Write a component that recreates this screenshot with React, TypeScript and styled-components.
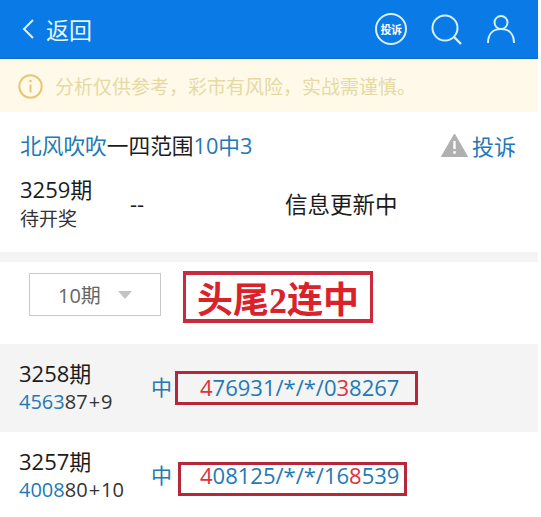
import React from "react";
import styled, { createGlobalStyle } from "styled-components";

const GlobalStyle = createGlobalStyle`
  html, body {
    margin: 0;
    padding: 0;
    background: #fff;
  }
  * {
    box-sizing: border-box;
  }
`;

const BlueText = "#2279b5";
const DarkText = "#1c1c1c";
const Mark = "#d8343a";

const Page = styled.div`
  width: 538px;
  height: 517px;
  overflow: hidden;
  font-family: "Open Sans", "Noto Sans CJK SC", sans-serif;
  color: ${DarkText};
`;

const Header = styled.header`
  height: 59px;
  background: #0a7ae6;
  display: flex;
  align-items: center;
  padding: 0 22px;
  color: #fff;
  border-bottom: 1px solid #0a6bc4;
`;

const BackLabel = styled.span`
  font-size: 23px;
  margin-left: 12px;
  color: #e8f6ff;
`;

const HeaderIcons = styled.div`
  margin-left: auto;
  display: flex;
  align-items: center;
  gap: 24px;
`;

const ReportBadge = styled.div`
  width: 32px;
  height: 32px;
  border-radius: 50%;
  border: 2px solid #d5f0ff;
  display: flex;
  align-items: center;
  justify-content: center;
  font-size: 11px;
  font-weight: 700;
  white-space: nowrap;
  letter-spacing: -0.5px;
`;

const Notice = styled.div`
  height: 52px;
  margin-top: 1px;
  background: #fff9ea;
  display: flex;
  align-items: center;
  gap: 12px;
  padding-left: 18px;
  font-size: 19px;
  color: #e6d9a2;
`;

const Title = styled.div`
  height: 65px;
  padding: 0 22px 0 20px;
  display: flex;
  align-items: center;
  font-size: 21.7px;
`;

const Blue = styled.span`
  color: ${BlueText};
`;

const Red = styled.span`
  color: ${Mark};
`;

const ReportLink = styled.span`
  margin-left: auto;
  display: flex;
  align-items: center;
  gap: 4px;
  font-size: 22px;
  color: ${BlueText};
`;

const Current = styled.div`
  height: 75px;
  padding: 0 0 0 20px;
  display: flex;
  align-items: flex-start;
`;

const CurrentPeriod = styled.div`
  width: 110px;
  margin-top: -2px;
`;

const PeriodName = styled.div`
  font-size: 22px;
  line-height: 28px;
`;

const Pending = styled.div`
  margin-top: 3px;
  font-size: 19px;
  line-height: 26px;
  color: #333;
`;

const Dashes = styled.div`
  width: 155px;
  font-size: 22px;
  line-height: 28px;
  padding-top: 12px;
`;

const Updating = styled.div`
  font-size: 22.5px;
  line-height: 28px;
  padding-top: 14px;
`;

const Band = styled.div`
  height: 10px;
  background: #f3f4f3;
`;

const FilterRow = styled.div`
  height: 82px;
  padding: 9px 0 0 29px;
  display: flex;
  align-items: flex-start;
  gap: 22px;
`;

const Select = styled.div`
  width: 132px;
  height: 43px;
  margin-top: 2px;
  border: 1px solid #c9c9c9;
  display: flex;
  align-items: center;
  padding-left: 28px;
  font-size: 20px;
  color: #666;
  gap: 17px;
`;

const Caret = styled.i`
  width: 0;
  height: 0;
  border-left: 7px solid transparent;
  border-right: 7px solid transparent;
  border-top: 8px solid #c4c4c4;
`;

const Stamp = styled.div`
  width: 190px;
  height: 52px;
  border: 3px solid #c92a3e;
  border-width: 4px 3px;
  display: flex;
  align-items: center;
  justify-content: center;
  font-family: "Liberation Serif", "Noto Sans CJK SC", serif;
  font-weight: 700;
  font-size: 36px;
  color: #d9222a;
  white-space: nowrap;
`;

const Row = styled.div<{ $shaded?: boolean }>`
  position: relative;
  height: ${({ $shaded }) => ($shaded ? "88px" : "85px")};
  background: ${({ $shaded }) => ($shaded ? "#f4f4f4" : "#fff")};
  padding: 15px 0 0 19px;
  display: flex;
  align-items: flex-start;
`;

const RowPeriod = styled.div`
  width: 132px;
`;

const Draw = styled.div`
  margin-top: 1px;
  font-size: 20px;
  line-height: 27px;
  color: #333;
`;

const Plus = styled.span`
  margin: 0 1px;
`;

const Hit = styled.div`
  width: 49px;
  font-size: 21px;
  line-height: 28px;
  padding-top: 14px;
  color: ${BlueText};
`;

const Numbers = styled.div`
  font-size: 22px;
  line-height: 28px;
  padding-top: 14px;
  color: ${BlueText};
  white-space: nowrap;
`;

const HighlightBox = styled.div<{ $left: number; $top: number; $width: number }>`
  position: absolute;
  left: ${({ $left }) => $left}px;
  top: ${({ $top }) => $top}px;
  width: ${({ $width }) => $width}px;
  height: 34px;
  border: 3px solid #b5283a;
`;

const IconSvg = styled.svg`
  display: block;
  flex: none;
`;

const Chevron = () => (
  <IconSvg width="12" height="20" viewBox="0 0 12 20" fill="none">
    <path d="M11 1 2 10l9 9" stroke="#d9f2ff" strokeWidth="2" />
  </IconSvg>
);

const SearchIcon = () => (
  <IconSvg width="31" height="31" viewBox="0 0 31 31" fill="none">
    <circle cx="14" cy="14" r="12.5" stroke="#d5f0ff" strokeWidth="2" />
    <path d="m23 23 7 7" stroke="#d5f0ff" strokeWidth="2.4" />
  </IconSvg>
);

const UserIcon = () => (
  <IconSvg width="30" height="30" viewBox="0 0 30 30" fill="none">
    <circle cx="15" cy="8.5" r="6.5" stroke="#d5f0ff" strokeWidth="2" />
    <path d="M2 29c0-9 5-14 13-14s13 5 13 14" stroke="#d5f0ff" strokeWidth="2" />
  </IconSvg>
);

const InfoIcon = () => (
  <IconSvg width="25" height="25" viewBox="0 0 25 25" fill="none">
    <circle cx="12.5" cy="12.5" r="11.2" stroke="#e5c872" strokeWidth="2" />
    <path d="M12.5 10.5v8" stroke="#e5c872" strokeWidth="2" />
    <circle cx="12.5" cy="7" r="1.3" fill="#e5c872" />
  </IconSvg>
);

const WarnIcon = () => (
  <IconSvg width="27" height="24" viewBox="0 0 27 24">
    <path d="M13.5 1 26.5 23.5H.5z" fill="#b0b0b0" stroke="#b0b0b0" strokeLinejoin="round" />
    <path d="M13.5 8v8" stroke="#fff" strokeWidth="2.4" />
    <circle cx="13.5" cy="19.5" r="1.4" fill="#fff" />
  </IconSvg>
);

const App: React.FC = () => (
  <Page>
    <GlobalStyle />
    <Header>
      <Chevron />
      <BackLabel>返回</BackLabel>
      <HeaderIcons>
        <ReportBadge>投诉</ReportBadge>
        <SearchIcon />
        <UserIcon />
      </HeaderIcons>
    </Header>
    <Notice>
      <InfoIcon />
      分析仅供参考，彩市有风险，实战需谨慎。
    </Notice>
    <Title>
      <Blue>北风吹吹</Blue>一四范围<Blue>10中3</Blue>
      <ReportLink>
        <WarnIcon />
        投诉
      </ReportLink>
    </Title>
    <Current>
      <CurrentPeriod>
        <PeriodName>3259期</PeriodName>
        <Pending>待开奖</Pending>
      </CurrentPeriod>
      <Dashes>--</Dashes>
      <Updating>信息更新中</Updating>
    </Current>
    <Band />
    <FilterRow>
      <Select>
        10期
        <Caret />
      </Select>
      <Stamp>头尾2连中</Stamp>
    </FilterRow>
    <Row $shaded>
      <RowPeriod>
        <PeriodName>3258期</PeriodName>
        <Draw>
          <Blue>4563</Blue>87<Plus>+</Plus>9
        </Draw>
      </RowPeriod>
      <Hit>中</Hit>
      <Numbers>
        <Red>4</Red>76931/*/*/0<Red>3</Red>8267
      </Numbers>
      <HighlightBox $left={175} $top={27} $width={243} />
    </Row>
    <Row>
      <RowPeriod>
        <PeriodName>3257期</PeriodName>
        <Draw>
          <Blue>4008</Blue>80<Plus>+</Plus>10
        </Draw>
      </RowPeriod>
      <Hit>中</Hit>
      <Numbers>
        <Red>4</Red>08125/*/*/16<Red>8</Red>539
      </Numbers>
      <HighlightBox $left={178} $top={30} $width={229} />
    </Row>
  </Page>
);

export default App;
